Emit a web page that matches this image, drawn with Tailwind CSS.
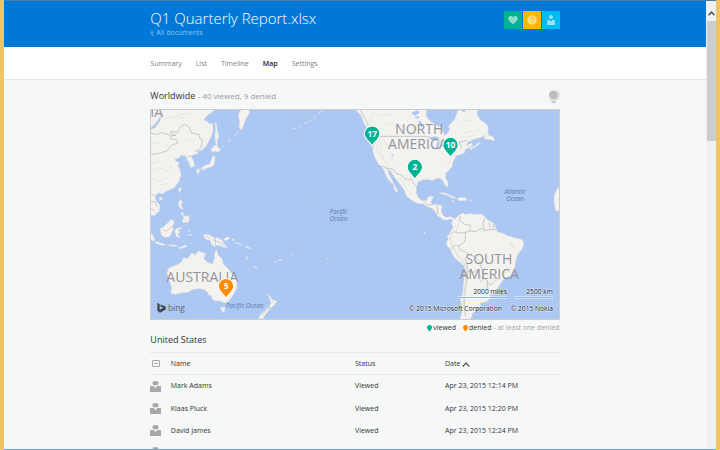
<!DOCTYPE html>
<html lang="en">
<head>
    <meta charset="UTF-8">
    <meta name="viewport" content="width=device-width, initial-scale=1.0">
    <title>Q1 Quarterly Report.xlsx</title>
    <script src="https://cdn.jsdelivr.net/npm/@tailwindcss/browser@4"></script>
</head>
<body class="flex h-screen flex-col overflow-hidden border-x-4 border-[#efc564] bg-[#f6f8f8] font-['Open_Sans',sans-serif] text-[7px] leading-[10px] text-[#333333]">
    <!-- window edge -->
    <div class="h-px shrink-0 bg-[#4a7ba6]"></div>

    <div class="flex min-h-0 flex-1">
        <div class="min-w-0 flex-1 overflow-hidden">
            <header class="bg-[#0078d7]">
                <div class="mx-auto flex h-[46px] w-[58.3%] items-start justify-between">
                    <div class="pt-[7px]">
                        <h1 class="text-[15px] leading-5 font-light text-white">Q1 Quarterly Report.xlsx</h1>
                        <a href="#" class="flex items-center gap-[2px] text-[#8cc4f2]">
                            <svg class="h-[5px] w-1" viewBox="0 0 4 5" fill="none" stroke="currentColor" stroke-width=".7"><path d="M.4 1.900 2 .5l1.600 1.400M2 .6v3.900h1.300"/></svg>
                            All documents
                        </a>
                    </div>
                    <div class="flex gap-px pt-[10px]">
                        <button aria-label="Favorite" class="flex size-[18px] items-center justify-center bg-[#00b294]">
                            <svg class="size-[10px]" viewBox="0 0 10 10" fill="#8fdccd"><path d="M5 9.300C3.300 7.800.2 5.800.2 3.300.2 1.800 1.300.9 2.600.9 3.700.9 4.500 1.400 5 2.300 5.500 1.400 6.300.9 7.400.9c1.300 0 2.400.9 2.400 2.400C9.800 5.800 6.700 7.800 5 9.300z"/></svg>
                        </button>
                        <button aria-label="Help" class="flex size-[18px] items-center justify-center bg-[#ffb900]">
                            <svg class="size-[10px]" viewBox="0 0 10 10"><circle cx="5" cy="5" r="4.600" fill="#ffdf8a"/><path d="M3.400 3.900C3.500 2.900 4.200 2.400 5 2.400c1 0 1.700.6 1.700 1.400C6.700 4.900 5.100 4.900 5.100 6.200M5.100 7v.9" fill="none" stroke="#f5ac00" stroke-width="1"/></svg>
                        </button>
                        <button aria-label="Account" class="flex size-[18px] items-center justify-center bg-[#00bcf2]">
                            <svg class="size-[10px]" viewBox="0 0 10 10" fill="#9be4fa"><circle cx="5" cy="2" r="2"/><path d="M1.200 5h2.300L5 6.700 6.500 5h2.300v5H1.200z"/></svg>
                        </button>
                    </div>
                </div>
            </header>

            <nav class="border-b border-[#e3e5e5] bg-white">
                <div class="mx-auto flex h-8 w-[58.3%] items-center gap-[14px] pt-px text-[#808080]">
                    <a href="#">Summary</a>
                    <a href="#">List</a>
                    <a href="#">Timeline</a>
                    <a href="#" class="font-semibold text-[#222222]">Map</a>
                    <a href="#">Settings</a>
                </div>
            </nav>

            <main class="mx-auto w-[58.3%]">
                <div class="flex h-[29px] items-center justify-between pt-[3px]">
                    <h2 class="text-[9px] leading-3">Worldwide <span class="text-[8px] text-[#999999]">- 40 viewed, 9 denied</span></h2>
                    <svg class="h-[14px] w-3" viewBox="0 0 12 14"><circle cx="5.500" cy="6" r="4.500" fill="#bdbdbd"/><path d="M8.500 1c4 2.500 3.600 8.500-.5 10.200-2 .9-4.500.7-6-.4" fill="none" stroke="#c8c8c8" stroke-width=".8"/><path d="M5.500 11.800V13M3.500 13.300h4.500" fill="none" stroke="#b4b4b4"/></svg>
                </div>

                <div class="border border-[#c9ced3] bg-[#abc7f2]">
                    <svg class="block w-full" viewBox="3 3 1221 627" font-family="'Open Sans', sans-serif">
                        <defs>
                            <path id="pin" d="M0 36C-4 24-23 17-23-1A23 23 0 0 1 23-1C23 17 4 24 0 36z" stroke="#ffffff" stroke-width="3"/>
                        </defs>

                        <!-- Asia -->
                        <g transform="translate(-15 -12)" fill="#f3f2ef" stroke="#d9dbdf" stroke-width="1.500" stroke-linejoin="round">
                            <path d="M10 5H212L202 22 188 30 176 44 188 50 194 56 203 55 204 78 196 100 184 122 171 136 157 139 158 146 137 152 145 166 149 184 137 188 132 172 124 162 121 152 108 151 103 158 90 162 91 168 104 173 98 181 105 194 108 210 101 230 88 248 65 258 52 267 40 264 30 273 35 290 45 301 43 318 28 332 18 330 10 320z"/>
                            <path d="M283 20 297 8H314L312 28 302 42 296 60 289 76 282 66 284 48 279 35zM209 52 215 55 216 76 222 94 216 106 218 122 212 116 209 92 212 74zM206 123 214 120 227 135 218 142 209 138 202 143 198 134zM204 151 210 158 207 180 197 187 186 189 177 194 166 191 181 181 193 177 199 164zM154 194 162 190 164 199 158 209zM168 192 177 190 176 198zM100 251 107 246 109 254 104 264zM42 279 50 275 53 283 44 286zM101 289 108 284 112 290 109 304 117 313 107 310 101 302zM107 326 113 321 116 331zM124 338 129 330 133 342 130 352H113L112 342z"/>
                            <path d="M478 57 488 51M492 50 500 43M505 40 513 30M518 28 534 14M446 71 452 69M463 66 468 64M268 92 282 79M249 111 256 104M232 126 236 122M522 275 526 278" fill="none" stroke="#eceff2" stroke-width="2.500"/>
                            <path d="M15 76 30 68 45 48 50 28 41 42 29 58 15 70z" fill="#abc7f2"/>
                            <path d="M15 83 33 88 50 83 74 90 93 92 76 84 79 78 97 84 104 68 118 58 132 66 140 84 163 89 164 100 172 104 169 124 159 137 150 138M15 148 44 145 68 136 79 121 99 113 93 103 76 102 80 92M124 160 137 151M15 264 30 273M18 288 30 290 36 306M15 310 28 316" fill="none" stroke="#b4b4b7" stroke-width="2"/>
                            <path d="M20 175 42 168 60 178M24 198 48 190 74 200M20 220 48 228 66 216M58 42 90 34 120 40M100 30 140 24M64 120 80 126M124 100 142 106M20 110 44 116M44 240 70 234M72 185 88 192" fill="none" stroke="#dfdfdb" stroke-width="2"/>
                        </g>

                        <!-- North and Central America -->
                        <g transform="translate(600 -12)" fill="#f3f2ef" stroke="#d9dbdf" stroke-width="1.500" stroke-linejoin="round">
                            <path d="M8 5 22 20 34 34 40 52 48 66 60 88 68 100 70 120 68 138 74 158 87 180 100 192 108 212 116 226 129 238 134 256 142 264 143 256 132 238 124 222 114 202 111 192 121 198 134 218 150 238 163 256 168 272 184 286 204 296 219 296 238 308 252 316 264 332 278 343 291 345 301 340 312 349 310 340 300 334 288 338 278 330 273 318 276 302 258 298 244 298 242 290 250 274 240 273 232 278 230 286 216 288 205 278 198 262 200 244 203 231 218 224 236 224 248 227 256 221 270 220 278 226 284 240 293 247 294 234 286 218 286 206 296 196 306 184 308 172 313 162 318 152 334 148 343 144 344 134 356 128 367 121 365 113 350 122 352 112 374 102 396 96 406 87 413 82 414 64 403 52 390 44 380 28 382 16 376 5H328L318 30 312 46 302 55 295 62 298 74 292 84 284 92 279 82 276 68 258 60 242 50 228 34 230 5z"/>
                            <path d="M401 101 405 88 414 78 414 90 430 96 432 108 421 104zM358 128 373 123 386 112 392 112 382 122 367 130 360 135zM268 264 280 262 296 268 310 274 320 281 304 278 290 270 276 267zM322 280 330 277 345 278 351 286 338 286 326 288zM303 286 313 287 309 291zM358 285 366 285 365 289zM612 268 632 234V318H616L612 294z"/>
                            <path d="M183 24 202 16 208 23 194 32zM190 36 207 33 204 41zM238 98 256 94 270 102 256 106 242 104zM262 108 268 112 265 134 257 131zM274 106 288 110 292 122 280 120zM282 130 298 126 302 132 286 136zM302 122 316 118 318 124 306 126zM204 47 213 50 217 65 211 66zM125 146 131 150 128 156zM334 11 348 13 342 22 334 17z" fill="#abc7f2" stroke="none"/>
                            <path d="M90 94H228L246 99 266 106 288 120 304 128 328 112 350 106M82 182 98 184 110 190 126 191 140 206 154 210 166 224 182 222 196 242 204 252M22 5 40 30 54 62M222 290 232 299 244 300M236 308 248 312M260 302 264 328M328 112 334 130" fill="none" stroke="#b4b4b7" stroke-width="2"/>
                            <path d="M60 36 78 58 82 92 94 120 92 146 106 172 124 200M52 44 70 72 76 110 84 144 100 160M110 116 118 142 130 166 144 182M100 100 108 124M150 216 166 246 184 270M166 210 180 240M290 184 300 164 318 142M62 24 92 32 126 28M110 60 130 54M330 56 350 44 366 48M340 84 370 78 390 74M332 98 372 92" fill="none" stroke="#dfdfdb" stroke-width="2"/>
                        </g>

                        <!-- South America -->
                        <g transform="translate(600 318)" fill="#f3f2ef" stroke="#d9dbdf" stroke-width="1.500" stroke-linejoin="round">
                            <path d="M310 15 318 8 328 0 338-7 344-2 358-5 374-2 392-3 403 4 416 16 430 24 438 40 441 50 456 54 472 62 494 68 516 74 521 86 516 102 501 120 496 142 492 164 481 182 462 190 451 206 438 225 430 238 418 238 422 248 410 260 390 264 392 274 376 278 378 290 366 294 366 304 356 316H328L334 296 335 274 331 256 338 230 340 204 344 172 342 152 324 138 311 126 301 104 289 90 290 78 296 72 290 66 301 50 308 38 304 22z"/>
                            <path d="M261 0 280 6 292 12 304 8 312 16" fill="none" stroke="#f3f2ef" stroke-width="5"/>
                            <path d="M330 2 328 16 344 28 360 30 360 48 344 52 346 70 342 82 326 92 330 104 344 110 356 118 372 124 388 142 396 164 400 184 410 196 418 210 430 204M360 48 376 50 392 40 402 46 398 24 404 10M402 46 420 44 438 42M298 60 310 50 330 54 344 52M302 104 310 92 326 92M344 128 350 146 352 168 370 172 380 164M352 170 350 196 344 230 342 270 346 304M388 180 398 192 390 202M412 200 410 220 424 230M416 22 420 38M430 26 428 40" fill="none" stroke="#b4b4b7" stroke-width="2"/>
                            <path d="M300 64 304 86 320 118 338 138 350 158 348 192 342 228 338 280M318 50 326 24M478 80 492 100M456 176 480 166M430 198 446 192" fill="none" stroke="#dfdfdb" stroke-width="3"/>
                        </g>

                        <!-- Oceania -->
                        <g transform="translate(-15 318)" fill="#f3f2ef" stroke="#d9dbdf" stroke-width="1.500" stroke-linejoin="round">
                            <path d="M66 172 72 158 94 150 108 142 116 128 128 130 140 114 152 118 160 107 172 112 182 116 176 130 188 142 203 146 208 130 209 112 215 104 220 122 231 130 235 148 247 158 258 172 266 184 276 194 275 220 264 240 251 258 239 264 226 258 210 258 200 252 200 240 192 242 188 232 178 224 160 220 142 224 128 232 108 234 88 238 77 234 80 218 72 196z"/>
                            <path d="M226 276 241 277 238 291 231 290zM367 237 374 243 382 254 395 258 388 270 377 279 372 274 378 264 375 254zM367 276 374 281 368 290 360 300 354 311H340L346 298 358 288zM45 40 55 36 68 24 80 12 88 22 82 33 85 42 75 64 60 67 49 60zM89 48 94 40 110 36 108 42 98 44 106 52 98 54 104 68 94 64zM113 1 132 4 133 14 127 18 118 12zM174 61 184 57 194 60 204 67 218 68 232 76 238 86 247 98 234 96 222 90 208 94 199 88 196 76 184 74zM15 52 24 60 30 76 22 78 15 72zM30 78 48 84 61 88 56 91 34 86zM66 90 88 89 98 94 84 94zM100 98 122 90 126 94 108 101zM236 72 250 64 254 70 240 78zM264 70 269 78 261 75z"/>
                            <path d="M272 82 290 90M300 94 316 100M302 124 308 132M326 154 336 160M388 142 396 138M400 137 410 133M442 116 444 120M546 130 550 133M130 45 134 50M128 60 142 60" fill="none" stroke="#e9edf1" stroke-width="3"/>
                            <path d="M211 65 212 92M52 44 64 48 78 36 86 34M204 74 228 84 240 93M182 62 196 72M372 272 350 302M381 262 386 260" fill="none" stroke="#b9b9bb" stroke-width="2"/>
                            <circle cx="838" cy="53" r="2" stroke="none"/>
                        </g>

                        <!-- continents -->
                        <g fill="#94949e" font-size="42">
                            <text x="1" y="24">IA</text>
                            <g text-anchor="middle">
                                <text x="807" y="75">NORTH</text>
                                <text x="803" y="119">AMERICA</text>
                                <text x="157" y="520">AUSTRALIA</text>
                                <text x="1016" y="466">SOUTH</text>
                                <text x="1017" y="510">AMERICA</text>
                            </g>
                        </g>

                        <!-- oceans -->
                        <g fill="#6079b0" font-size="19" font-style="italic" text-anchor="middle">
                            <text x="565" y="314">Pacific</text>
                            <text x="565" y="335">Ocean</text>
                            <text x="1094" y="254">Atlantic</text>
                            <text x="1094" y="275">Ocean</text>
                            <text x="284" y="598">Pacific Ocean</text>
                        </g>

                        <!-- bing -->
                        <path d="M22 582 29 585V602L40 596 33 593 30 586 47 592V601L30 611 22 605z" fill="#444444"/>
                        <text x="54" y="605" font-size="25" fill="#666666">bing</text>

                        <!-- scale and copyright -->
                        <g fill="#1f1f1f" font-size="20" text-anchor="end" stroke="#ffffff" stroke-opacity=".6" stroke-width="3" paint-order="stroke">
                            <text x="1070" y="556">2000 miles</text>
                            <text x="1208" y="556">2500 km</text>
                            <text x="1055" y="607">© 2015 Microsoft Corporation</text>
                            <text x="1208" y="607">© 2015 Nokia</text>
                        </g>
                        <path d="M920 565H1070M1093 565H1208" stroke="#ffffff" stroke-width="6"/>
                        <path d="M920 565H1070M1093 565H1208" stroke="#8ab8f5" stroke-width="3"/>

                        <!-- visits -->
                        <g font-size="25" font-weight="700" text-anchor="middle" fill="#ffffff">
                            <g transform="translate(666 75)"><use href="#pin" fill="#00b294"/><text y="8">17</text></g>
                            <g transform="translate(901 109)"><use href="#pin" fill="#00b294"/><text y="8">10</text></g>
                            <g transform="translate(794 175)"><use href="#pin" fill="#00b294"/><text y="8">2</text></g>
                            <g transform="translate(228 532)"><use href="#pin" fill="#ff8c00"/><text y="8">5</text></g>
                        </g>
                    </svg>
                </div>

                <div class="flex items-center justify-end gap-[7px] pt-[3px]">
                    <span class="flex items-center gap-px">
                        <svg class="h-[7px] w-[5px]" viewBox="0 0 5 7" fill="#00b294"><path d="M2.500 7C2.200 5.300 0 4.600 0 2.500a2.500 2.500 0 0 1 5 0C5 4.600 2.800 5.300 2.500 7z"/></svg>
                        viewed
                    </span>
                    <span class="flex items-center gap-px">
                        <svg class="h-[7px] w-[5px]" viewBox="0 0 5 7" fill="#ff8c00"><path d="M2.500 7C2.200 5.300 0 4.600 0 2.500a2.500 2.500 0 0 1 5 0C5 4.600 2.800 5.300 2.500 7z"/></svg>
                        <span>denied <span class="text-[#a6a6a6]">- at least one denied</span></span>
                    </span>
                </div>

                <h2 class="pt-px pb-[6px] text-[9px] leading-3">United States</h2>

                <table class="w-full table-fixed text-left">
                    <thead>
                        <tr class="h-[22px] border-y border-[#e6e8e8]">
                            <th class="w-[5%]">
                                <button aria-label="Collapse" class="ml-[2px] block">
                                    <svg class="size-2" viewBox="0 0 8 8" fill="none" stroke="#aaaaaa"><path d="M.5.5h7v6h-7zM2 3.500h4"/></svg>
                                </button>
                            </th>
                            <th class="w-[45%] pt-px font-normal">Name</th>
                            <th class="w-[22%] pt-px font-normal">Status</th>
                            <th class="w-[28%] pt-px font-normal">
                                <button class="flex items-center gap-[2px]">
                                    Date
                                    <svg class="h-[5px] w-2" viewBox="0 0 8 5" fill="none" stroke="#444444" stroke-width="1.100"><path d="M.7 4.500 4 1l3.300 3.500"/></svg>
                                </button>
                            </th>
                        </tr>
                    </thead>
                    <tbody>
                        <tr class="h-[23px]">
                            <td><svg class="size-[11px]" viewBox="0 0 11 11" fill="#a8a8a8"><ellipse cx="5.500" cy="2.200" rx="3" ry="2.200"/><path d="M0 5h3.500l2 2 2-2H11v6H0z"/></svg></td>
                            <td>Mark Adams</td>
                            <td>Viewed</td>
                            <td>Apr 23, 2015 12:14 PM</td>
                        </tr>
                        <tr class="h-[22px]">
                            <td><svg class="size-[11px]" viewBox="0 0 11 11" fill="#a8a8a8"><ellipse cx="5.500" cy="2.200" rx="3" ry="2.200"/><path d="M0 5h3.500l2 2 2-2H11v6H0z"/></svg></td>
                            <td>Klaas Pluck</td>
                            <td>Viewed</td>
                            <td>Apr 23, 2015 12:20 PM</td>
                        </tr>
                        <tr class="h-[22px]">
                            <td><svg class="size-[11px]" viewBox="0 0 11 11" fill="#a8a8a8"><ellipse cx="5.500" cy="2.200" rx="3" ry="2.200"/><path d="M0 5h3.500l2 2 2-2H11v6H0z"/></svg></td>
                            <td>David James</td>
                            <td>Viewed</td>
                            <td>Apr 23, 2015 12:24 PM</td>
                        </tr>
                        <tr class="h-[22px]">
                            <td><svg class="size-[11px]" viewBox="0 0 11 11" fill="#a8a8a8"><ellipse cx="5.500" cy="2.200" rx="3" ry="2.200"/><path d="M0 5h3.500l2 2 2-2H11v6H0z"/></svg></td>
                            <td></td>
                            <td></td>
                            <td></td>
                        </tr>
                    </tbody>
                </table>
            </main>
        </div>

        <!-- scrollbar -->
        <div class="flex w-[10px] shrink-0 flex-col bg-[#f0f0f0]">
            <button aria-label="Scroll up" class="flex h-5 shrink-0 items-center justify-center pt-1">
                <svg class="h-[5px] w-[7px]" viewBox="0 0 7 5" fill="none" stroke="#505050" stroke-width="1.500"><path d="M.5 4.300 3.500 1.200l3 3.100"/></svg>
            </button>
            <div class="ml-px h-[120px] bg-[#cdcdcd]"></div>
        </div>
    </div>

    <div class="h-px shrink-0 bg-[#62a5d8]"></div>
</body>
</html>
